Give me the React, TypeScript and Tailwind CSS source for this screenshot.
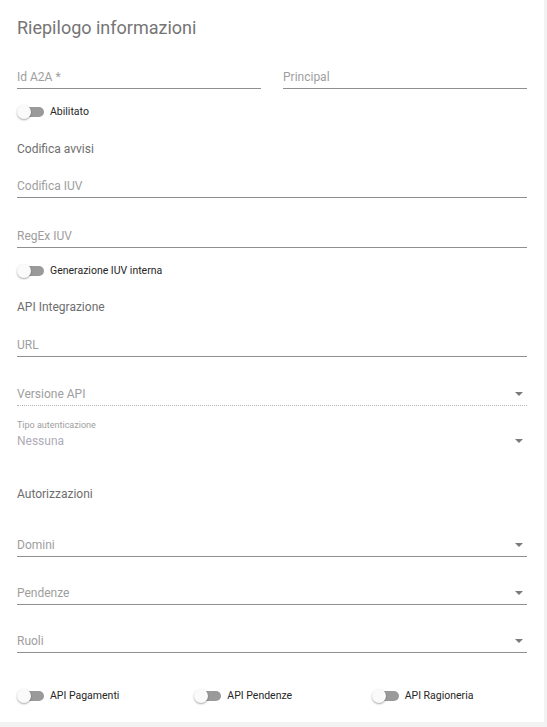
import React from "react"

function Arrow() {
    return (
        <svg width="8" height="4" viewBox="0 0 8 4" className="shrink-0">
            <path d="M0 0 L8 0 L4 4 Z" fill="#7a7a7a" />
        </svg>
    )
}

function Field({ label, className = "" }: { label: string; className?: string }) {
    return (
        <div className={`border-b border-[#8f8f8f] pb-[1px] ${className}`}>
            <div className="h-[22px] pt-[2px] text-[12px] leading-5 text-[#9e9e9e]">{label}</div>
        </div>
    )
}

function SelectField({ label, className = "" }: { label: string; className?: string }) {
    return (
        <div className={`border-b border-[#8f8f8f] pb-[1px] ${className}`}>
            <div className="flex h-[22px] items-end justify-between pr-[4px] text-[12px] leading-5 text-[#9e9e9e]">
                <span>{label}</span>
                <span className="pb-[8px]">
                    <Arrow />
                </span>
            </div>
        </div>
    )
}

function Toggle({ label, className = "" }: { label: string; className?: string }) {
    return (
        <div className={`flex h-5 items-center ${className}`}>
            <div className="relative h-[14px] w-[27px] shrink-0">
                <div className="absolute left-[3px] top-[2px] h-[10px] w-[24px] rounded-full bg-[#9a9a9a]" />
                <div className="absolute left-0 top-0 h-[14px] w-[14px] rounded-full bg-[#fafafa] shadow-[0_1px_2px_rgba(0,0,0,0.35)]" />
            </div>
            <span className="ml-[6px] text-[10.5px] leading-4 text-[#262626]">{label}</span>
        </div>
    )
}

function SectionTitle({ children, className = "" }: { children: React.ReactNode; className?: string }) {
    return <div className={`h-5 text-[12px] leading-5 text-[#6e6e6e] ${className}`}>{children}</div>
}

export default function App() {
    return (
        <div className="min-h-[727px] bg-[#f2f2f2]" style={{ fontFamily: "Roboto, 'Liberation Sans', sans-serif" }}>
            <div className="h-[722px] w-[544px] bg-white px-[17px] pt-[16px]">
                <h1 className="h-6 text-[18px] leading-6 text-[#757575]">Riepilogo informazioni</h1>

                <div className="mt-[25px] flex gap-[22px]">
                    <Field label="Id A2A *" className="flex-1" />
                    <Field label="Principal" className="flex-1" />
                </div>

                <Toggle label="Abilitato" className="mt-[13px]" />

                <SectionTitle className="mt-[17px]">Codifica avvisi</SectionTitle>
                <Field label="Codifica IUV" className="mt-[15px]" />
                <Field label="RegEx IUV" className="mt-[26px]" />

                <Toggle label="Generazione IUV interna" className="mt-[13px]" />

                <SectionTitle className="mt-[16px]">API Integrazione</SectionTitle>
                <Field label="URL" className="mt-[16px]" />

                <div className="mt-[25px] border-b border-dotted border-[#b5b5b5] pb-[1px]">
                    <div className="flex h-[22px] items-end justify-between pr-[4px] text-[12px] leading-5 text-[#9e9e9e]">
                        <span>Versione API</span>
                        <span className="pb-[8px]">
                            <Arrow />
                        </span>
                    </div>
                </div>

                <div className="mt-[13px] h-3 text-[9px] leading-3 text-[#9e9e9e]">Tipo autenticazione</div>
                <div className="flex h-5 items-center justify-between pr-[4px] text-[12px] leading-5 text-[#b0abb8]">
                    <span>Nessuna</span>
                    <Arrow />
                </div>

                <SectionTitle className="mt-[33px]">Autorizzazioni</SectionTitle>
                <SelectField label="Domini" className="mt-[29px]" />
                <SelectField label="Pendenze" className="mt-[24px]" />
                <SelectField label="Ruoli" className="mt-[24px]" />

                <div className="mt-[33px] grid grid-cols-3 gap-[22px]">
                    <Toggle label="API Pagamenti" />
                    <Toggle label="API Pendenze" />
                    <Toggle label="API Ragioneria" />
                </div>
            </div>
        </div>
    )
}
